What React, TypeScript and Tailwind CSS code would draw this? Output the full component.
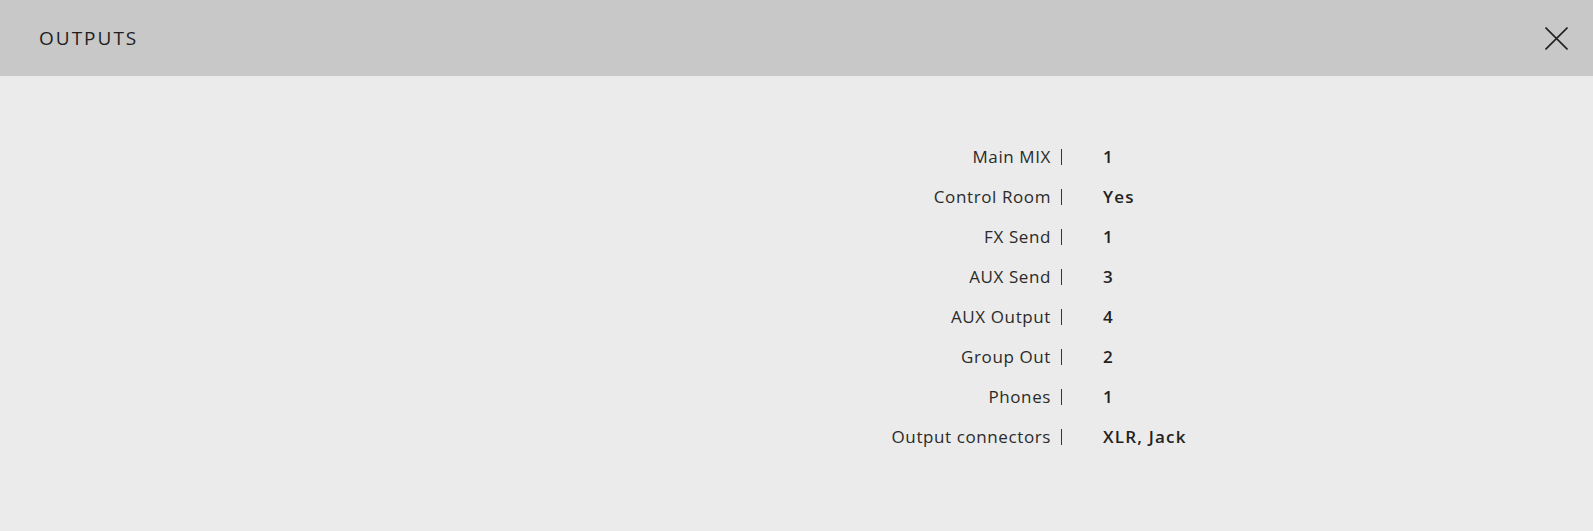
const rows: [string, string][] = [
  ['Main MIX', '1'],
  ['Control Room', 'Yes'],
  ['FX Send', '1'],
  ['AUX Send', '3'],
  ['AUX Output', '4'],
  ['Group Out', '2'],
  ['Phones', '1'],
  ['Output connectors', 'XLR, Jack'],
];

export default function App() {
  return (
    <div className="min-h-[531px] bg-[#ebebeb] font-['Open_Sans','Liberation_Sans',sans-serif] text-[#222]">
      {/* Header */}
      <div className="h-[76px] bg-[#c8c8c8] flex items-center justify-between pl-[39px] pr-[25px]">
        <h2 className="text-[19px] font-medium tracking-[2px] text-[#1e1e1e]">OUTPUTS</h2>
        <button className="p-0 text-[#222]">
          <svg width="23" height="23" viewBox="0 0 23 23" fill="none" stroke="currentColor" strokeWidth="1.6">
            <path d="M0.5 0.5L22.5 22.5M22.5 0.5L0.5 22.5" />
          </svg>
        </button>
      </div>

      {/* Specs */}
      <div className="pt-[61px] pb-[74px]">
        {rows.map(([label, value]) => (
          <div key={label} className="h-10 flex items-center">
            <div className="w-[1051px] text-right text-[17px] tracking-[0.6px] text-[#2a2a2a]">{label}</div>
            <div className="ml-[10px] w-px h-4 bg-[#333]"></div>
            <div className="ml-[41px] text-[17px] font-semibold tracking-[1.2px] text-[#222]">{value}</div>
          </div>
        ))}
      </div>
    </div>
  );
}
